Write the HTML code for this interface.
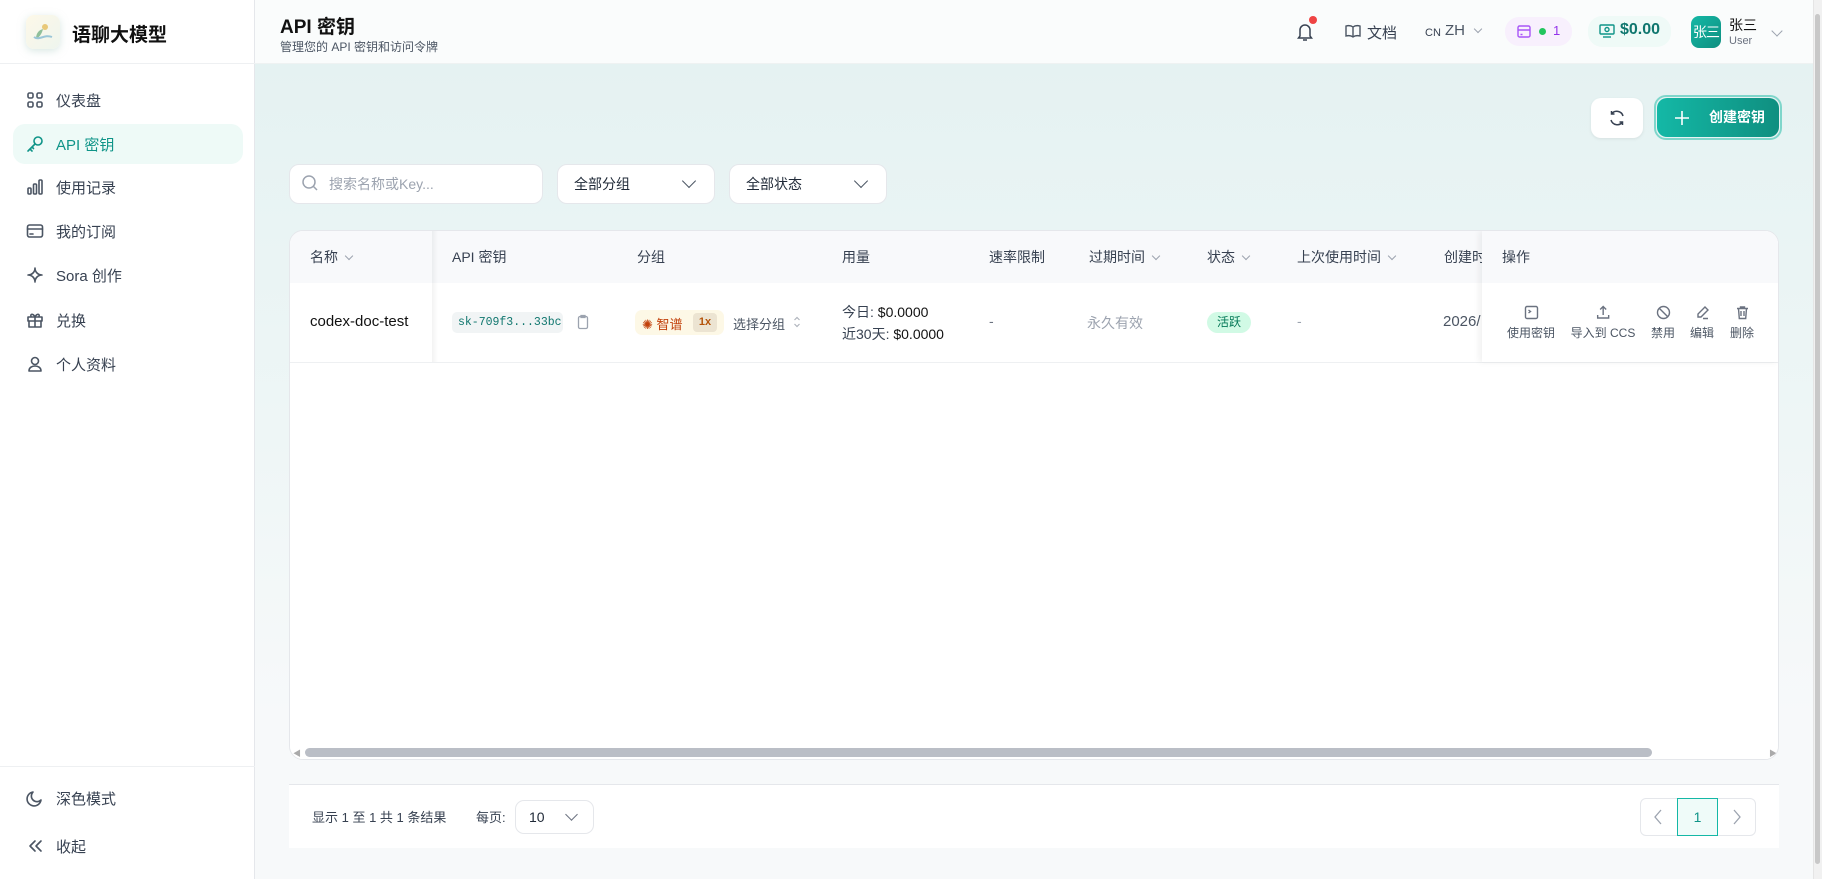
<!DOCTYPE html>
<html><head><meta charset="utf-8"><style>
*{box-sizing:border-box;margin:0;padding:0}
body{width:1822px;height:879px;overflow:hidden;font-family:"Liberation Sans","Noto Sans CJK SC",sans-serif;color:#1f2937;background:#f7f9fa;position:relative}
.abs{position:absolute}
.side{left:0;top:0;width:255px;height:879px;background:#fff;border-right:1px solid #e5e7eb}
.nav{position:absolute;left:13px;width:230px;height:40px;display:flex;align-items:center;padding-left:13px;font-size:15px;color:#374151;border-radius:12px}
.nav svg{width:18px;height:18px;margin-right:12px;fill:none;stroke:#4b5563;stroke-width:1.6;stroke-linecap:round;stroke-linejoin:round}
.nav.act{background:#eefaf7;color:#0f9488}
.nav.act svg{stroke:#0f9488}
.main{left:255px;top:64px;width:1558px;height:815px;background:linear-gradient(180deg,#e5f2f2 0%,#eef6f6 45%,#f7f9fa 80%)}
.hdr{left:255px;top:0;width:1558px;height:64px;background:rgba(250,252,252,.97);border-bottom:1px solid #eef2f2}
.th{position:absolute;top:0;height:52px;line-height:52px;font-size:14px;color:#374151}
.td{position:absolute;font-size:14px}
.chev{display:inline-block;width:6px;height:6px;border-right:1.3px solid #9ca3af;border-bottom:1.3px solid #9ca3af;transform:rotate(45deg);margin-left:8px;position:relative;top:-3px}
.achev{position:absolute;width:6px;height:6px;border-right:1.3px solid #9ca3af;border-bottom:1.3px solid #9ca3af;transform:rotate(45deg)}
.act-i{position:absolute;top:302px;text-align:center;font-size:12px;color:#4b5563;transform:translateX(-50%)}
.act-i svg{width:15px;height:15px;fill:none;stroke:#6b7280;stroke-width:1.4;display:block;margin:0 auto 4px}
</style></head><body>
<div class="abs side">
  <div class="abs" style="left:26px;top:15px;width:34px;height:34px;border-radius:8px;background:linear-gradient(135deg,#fdf8e8,#eef5ee);box-shadow:0 2px 8px rgba(180,210,200,.5)">
    <svg width="34" height="34" viewBox="0 0 34 34"><circle cx="19" cy="12" r="3" fill="#e8c878"/><path d="M10 24c0-6 3-9 7-10-1 4-3 8-7 10z" fill="#8fbf9a"/><path d="M8 22c5 4 10-3 18 0" stroke="#9ac6d8" stroke-width="2" fill="none"/></svg>
  </div>
  <div class="abs" style="left:72px;top:20px;font-size:19px;font-weight:bold;color:#111">语聊大模型</div>
  <div class="abs" style="left:0;top:63px;width:255px;border-top:1px solid #eef0f2"></div>
  <div class="nav" style="top:80px"><svg viewBox="0 0 18 18"><rect x="2" y="2" width="5" height="5" rx="1.5"/><rect x="11" y="2" width="5" height="5" rx="1.5"/><rect x="2" y="11" width="5" height="5" rx="1.5"/><rect x="11" y="11" width="5" height="5" rx="1.5"/></svg>仪表盘</div>
  <div class="nav act" style="top:124px"><svg viewBox="0 0 18 18"><circle cx="12" cy="6" r="4"/><path d="M9 9L2 16M4 14l2 2M6 12l1.5 1.5"/></svg>API 密钥</div>
  <div class="nav" style="top:167px"><svg viewBox="0 0 18 18"><rect x="2" y="10" width="3" height="6" rx="1"/><rect x="7.5" y="6" width="3" height="10" rx="1"/><rect x="13" y="2" width="3" height="14" rx="1"/></svg>使用记录</div>
  <div class="nav" style="top:211px"><svg viewBox="0 0 18 18"><rect x="1.5" y="3" width="15" height="12" rx="2"/><path d="M1.5 7h15M4 12h3"/></svg>我的订阅</div>
  <div class="nav" style="top:255px"><svg viewBox="0 0 18 18"><path d="M9 2c0 4 3 7 7 7-4 0-7 3-7 7 0-4-3-7-7-7 4 0 7-3 7-7z"/></svg>Sora 创作</div>
  <div class="nav" style="top:300px"><svg viewBox="0 0 18 18"><rect x="2" y="6" width="14" height="4"/><path d="M3 10v6h12v-6M9 6v10M9 6C7 2 4 3 5 5.5M9 6c2-4 5-3 4-.5"/></svg>兑换</div>
  <div class="nav" style="top:344px"><svg viewBox="0 0 18 18"><circle cx="9" cy="6" r="3.5"/><path d="M3 16c0-3.5 3-5 6-5s6 1.5 6 5z"/></svg>个人资料</div>
  <div class="abs" style="left:0;top:766px;width:255px;border-top:1px solid #eef0f2"></div>
  <div class="nav" style="top:778px"><svg viewBox="0 0 18 18"><path d="M15 11A7 7 0 1 1 7 3a5.5 5.5 0 0 0 8 8z"/></svg>深色模式</div>
  <div class="nav" style="top:826px"><svg viewBox="0 0 18 18"><path d="M9 4L4 9l5 5M15 4l-5 5 5 5"/></svg>收起</div>
</div>
<div class="abs main"></div>
<div class="abs hdr">
  <div class="abs" style="left:25px;top:12px;font-size:19px;font-weight:bold;color:#111">API 密钥</div>
  <div class="abs" style="left:25px;top:38px;font-size:12px;color:#4b5563">管理您的 API 密钥和访问令牌</div>
  <svg class="abs" style="left:1041px;top:22px" width="18" height="20" viewBox="0 0 18 20" fill="none" stroke="#374151" stroke-width="1.5"><path d="M4 14V8a5 5 0 0 1 10 0v6l1.5 2h-13zM7 18h4"/></svg>
  <div class="abs" style="left:1054px;top:16px;width:8px;height:8px;border-radius:50%;background:#ef4444"></div>
  <svg class="abs" style="left:1090px;top:24px" width="16" height="14" viewBox="0 0 16 14" fill="none" stroke="#4b5563" stroke-width="1.4"><path d="M8 3C6 1.5 3 1.5 1 2v10c2-.5 5-.5 7 1 2-1.5 5-1.5 7-1V2c-2-.5-5-.5-7 1zM8 3v10"/></svg>
  <div class="abs" style="left:1112px;top:22px;font-size:15px;color:#374151">文档</div>
  <div class="abs" style="left:1170px;top:27px;font-size:11px;color:#374151">CN</div>
  <div class="abs" style="left:1190px;top:22px;font-size:15px;color:#4b5563">ZH</div>
  <span class="achev" style="left:1220px;top:26px"></span>
  <div class="abs" style="left:1250px;top:17px;width:67px;height:29px;border-radius:14px;background:#f8f0fd"></div>
  <svg class="abs" style="left:1262px;top:25px" width="14" height="13" viewBox="0 0 14 13" fill="none" stroke="#a855f7" stroke-width="1.4"><rect x="1" y="1" width="12" height="11" rx="1.5"/><path d="M1 5h12M3.5 9.5h2"/></svg>
  <div class="abs" style="left:1284px;top:28px;width:7px;height:7px;border-radius:50%;background:#22c55e"></div>
  <div class="abs" style="left:1298px;top:23px;font-size:13px;color:#9333ea">1</div>
  <div class="abs" style="left:1333px;top:16px;width:83px;height:31px;border-radius:14px;background:#effaf7"></div>
  <svg class="abs" style="left:1344px;top:24px" width="16" height="14" viewBox="0 0 16 14" fill="none" stroke="#0f9488" stroke-width="1.4"><rect x="1" y="1" width="14" height="9" rx="1"/><circle cx="8" cy="5.5" r="2"/><path d="M4 13h8"/></svg>
  <div class="abs" style="left:1365px;top:21px;font-size:16px;font-weight:bold;color:#0f766e">$0.00</div>
  <div class="abs" style="left:1436px;top:16px;width:30px;height:32px;border-radius:8px;background:linear-gradient(135deg,#14b8a6,#0f8f80);color:#fff;font-size:14px;line-height:32px;text-align:center;letter-spacing:-1px">张三</div>
  <div class="abs" style="left:1474px;top:15px;font-size:14px;color:#111">张三</div>
  <div class="abs" style="left:1474px;top:35px;font-size:11px;color:#6b7280">User</div>
  <span class="achev" style="left:1518px;top:27px;width:8px;height:8px"></span>
</div>
<div class="abs" style="left:1813px;top:0;width:9px;height:879px;background:#f1f1f1;border-left:1px solid #e5e5e5"></div>
<div class="abs" style="left:1815px;top:14px;width:5px;height:850px;background:#c8c8c8;border-radius:3px"></div>

<div class="abs" style="left:1591px;top:98px;width:52px;height:40px;border-radius:10px;background:#fff;box-shadow:0 1px 3px rgba(0,0,0,.08)">
<svg style="position:absolute;left:17px;top:11px" width="18" height="18" viewBox="0 0 18 18" fill="none" stroke="#374151" stroke-width="1.5"><path d="M15 7A6.5 6.5 0 0 0 3.5 5M3 11a6.5 6.5 0 0 0 11.5 2M3.5 2v3h3M14.5 16v-3h-3"/></svg></div>
<div class="abs" style="left:1654px;top:95px;width:128px;height:45px;border-radius:12px;border:2px solid #7fd6cb"></div>
<div class="abs" style="left:1657px;top:98px;width:122px;height:39px;border-radius:10px;background:linear-gradient(90deg,#14b8a6,#0f8f80);color:#fff;font-size:14px;font-weight:bold;line-height:39px;padding-left:52px">创建密钥</div>
<svg class="abs" style="left:1674px;top:110px" width="16" height="16" viewBox="0 0 16 16" stroke="#fff" stroke-width="1.6"><path d="M8 1v14M1 8h14"/></svg>

<div class="abs" style="left:289px;top:164px;width:254px;height:40px;border-radius:10px;background:#fff;border:1px solid #e5e7eb"></div>
<svg class="abs" style="left:301px;top:174px" width="18" height="18" viewBox="0 0 18 18" fill="none" stroke="#9ca3af" stroke-width="1.5"><circle cx="8" cy="8" r="6"/><path d="M12.5 12.5L16 16"/></svg>
<div class="abs" style="left:329px;top:174px;font-size:14px;color:#9ca3af">搜索名称或Key...</div>
<div class="abs" style="left:557px;top:164px;width:158px;height:40px;border-radius:10px;background:#fff;border:1px solid #e5e7eb;font-size:14px;line-height:38px;padding-left:16px">全部分组</div>
<span class="achev" style="left:684px;top:176px;width:10px;height:10px;border-color:#4b5563"></span>
<div class="abs" style="left:729px;top:164px;width:158px;height:40px;border-radius:10px;background:#fff;border:1px solid #e5e7eb;font-size:14px;line-height:38px;padding-left:16px">全部状态</div>
<span class="achev" style="left:856px;top:176px;width:10px;height:10px;border-color:#4b5563"></span>

<div class="abs" style="left:289px;top:230px;width:1490px;height:530px;background:#fff;border:1px solid #e5e7eb;border-radius:14px;overflow:hidden">
  <div class="abs" style="left:0;top:0;width:1490px;height:52px;background:#f8f9fb"></div>
  <div class="abs" style="left:0;top:131px;width:1490px;border-top:1px solid #eef0f2"></div>
  <div class="abs" style="left:142px;top:0;width:6px;height:131px;background:linear-gradient(90deg,rgba(0,0,0,.05),transparent)"></div>
  <div class="th" style="left:20px">名称<span class="chev"></span></div>
  <div class="th" style="left:162px">API 密钥</div>
  <div class="th" style="left:347px">分组</div>
  <div class="th" style="left:552px">用量</div>
  <div class="th" style="left:699px">速率限制</div>
  <div class="th" style="left:799px">过期时间<span class="chev"></span></div>
  <div class="th" style="left:917px">状态<span class="chev"></span></div>
  <div class="th" style="left:1007px">上次使用时间<span class="chev"></span></div>
  <div class="th" style="left:1154px">创建时</div>
  <div class="abs" style="left:1192px;top:0;width:298px;height:131px;background:#fff;box-shadow:-3px 0 6px rgba(0,0,0,.06)"></div>
  <div class="abs" style="left:1192px;top:0;width:298px;height:52px;background:#f8f9fb"></div>
  <div class="th" style="left:1212px">操作</div>
  <div class="td" style="left:20px;top:82px;font-size:15px;color:#111">codex-doc-test</div>
  <div class="td" style="left:162px;top:81px;width:111px;height:21px;border-radius:5px;background:#f1f4f5;font-family:'Liberation Mono',monospace;font-size:11.5px;color:#0f766e;line-height:21px;padding-left:6px">sk-709f3...33bc</div>
  <svg class="abs" style="left:287px;top:83px" width="12" height="16" viewBox="0 0 12 16" fill="none" stroke="#9ca3af" stroke-width="1.3"><rect x="1.5" y="2.5" width="9" height="12" rx="1.5"/><path d="M4 1.5h4v2H4z"/></svg>
  <div class="abs" style="left:345px;top:79px;width:89px;height:25px;border-radius:7px;background:#fdf8e6"></div>
  <div class="td" style="left:352px;top:83px;font-size:13px;color:#c2410c">✺ 智谱</div>
  <div class="abs" style="left:403px;top:82px;width:24px;height:19px;border-radius:4px;background:#ece4d2;font-size:11px;font-weight:bold;color:#b45309;text-align:center;line-height:19px">1x</div>
  <div class="td" style="left:443px;top:83px;font-size:13px;color:#4b5563">选择分组</div>
  <svg class="abs" style="left:503px;top:84px" width="8" height="14" viewBox="0 0 8 14" fill="none" stroke="#b0b5bd" stroke-width="1.2"><path d="M1.5 5L4 2.5 6.5 5M1.5 9L4 11.5 6.5 9"/></svg>
  <div class="td" style="left:552px;top:71px;font-size:14px;color:#374151">今日: <span style="color:#111">$0.0000</span></div>
  <div class="td" style="left:552px;top:93px;font-size:14px;color:#374151">近30天: <span style="color:#111">$0.0000</span></div>
  <div class="td" style="left:699px;top:82px;color:#6b7280">-</div>
  <div class="td" style="left:797px;top:82px;color:#9ca3af">永久有效</div>
  <div class="td" style="left:917px;top:81px;width:44px;height:21px;border-radius:11px;background:#d1fae5;color:#047857;font-size:12px;text-align:center;line-height:21px">活跃</div>
  <div class="td" style="left:1007px;top:82px;color:#9ca3af">-</div>
  <div class="td" style="left:1153px;top:82px;font-size:15px;color:#4b5563">2026/</div>
  <div class="act-i" style="left:1241px;top:74px"><svg viewBox="0 0 15 15"><rect x="1.5" y="1.5" width="12" height="12" rx="1.5"/><path d="M4.5 5l2 1.5-2 1.5"/></svg>使用密钥</div>
  <div class="act-i" style="left:1313px;top:74px"><svg viewBox="0 0 15 15"><path d="M7.5 10V1.5M4.5 4.5l3-3 3 3M2 10v3h11v-3"/></svg>导入到 CCS</div>
  <div class="act-i" style="left:1373px;top:74px"><svg viewBox="0 0 15 15"><circle cx="7.5" cy="7.5" r="6"/><path d="M3.5 3.5l8 8"/></svg>禁用</div>
  <div class="act-i" style="left:1412px;top:74px"><svg viewBox="0 0 15 15"><path d="M10 2l3 3-7 7H3V9zM8 13.5h5"/></svg>编辑</div>
  <div class="act-i" style="left:1452px;top:74px"><svg viewBox="0 0 15 15"><path d="M2 3.5h11M5.5 3.5V2h4v1.5M3.5 3.5l.8 10h6.4l.8-10M6 6v5M9 6v5"/></svg>删除</div>
  <div class="abs" style="left:0;top:513px;width:1490px;height:17px;background:#fff"></div>
  <div class="abs" style="left:15px;top:517px;width:1347px;height:9px;border-radius:5px;background:#babec6"></div>
  <div class="abs" style="left:3px;top:517px;font-size:8px;color:#aaa">◀</div>
  <div class="abs" style="left:1479px;top:517px;font-size:8px;color:#aaa">▶</div>
</div>

<div class="abs" style="left:289px;top:784px;width:1490px;height:64px;background:#fff;border-top:1px solid #e5e7eb"></div>
<div class="abs" style="left:312px;top:807px;font-size:13px;color:#374151">显示 1 至 1 共 1 条结果</div>
<div class="abs" style="left:476px;top:807px;font-size:13px;color:#374151">每页:</div>
<div class="abs" style="left:515px;top:800px;width:79px;height:34px;border-radius:9px;border:1px solid #e5e7eb;font-size:14px;line-height:32px;padding-left:13px">10</div>
<span class="achev" style="left:567px;top:810px;width:9px;height:9px;border-color:#6b7280"></span>
<div class="abs" style="left:1640px;top:798px;width:116px;height:38px;border-radius:6px;border:1px solid #e5e7eb;background:#fff"></div>
<div class="abs" style="left:1677px;top:798px;width:41px;height:38px;border:1px solid #14b8a6;background:#effbf9;color:#0f9488;font-size:14px;text-align:center;line-height:36px">1</div>
<svg class="abs" style="left:1654px;top:809px" width="8" height="16" viewBox="0 0 8 16" fill="none" stroke="#9ca3af" stroke-width="1.3"><path d="M7 1L1 8l6 7"/></svg>
<svg class="abs" style="left:1733px;top:809px" width="8" height="16" viewBox="0 0 8 16" fill="none" stroke="#9ca3af" stroke-width="1.3"><path d="M1 1l6 7-6 7"/></svg>
</body></html>
